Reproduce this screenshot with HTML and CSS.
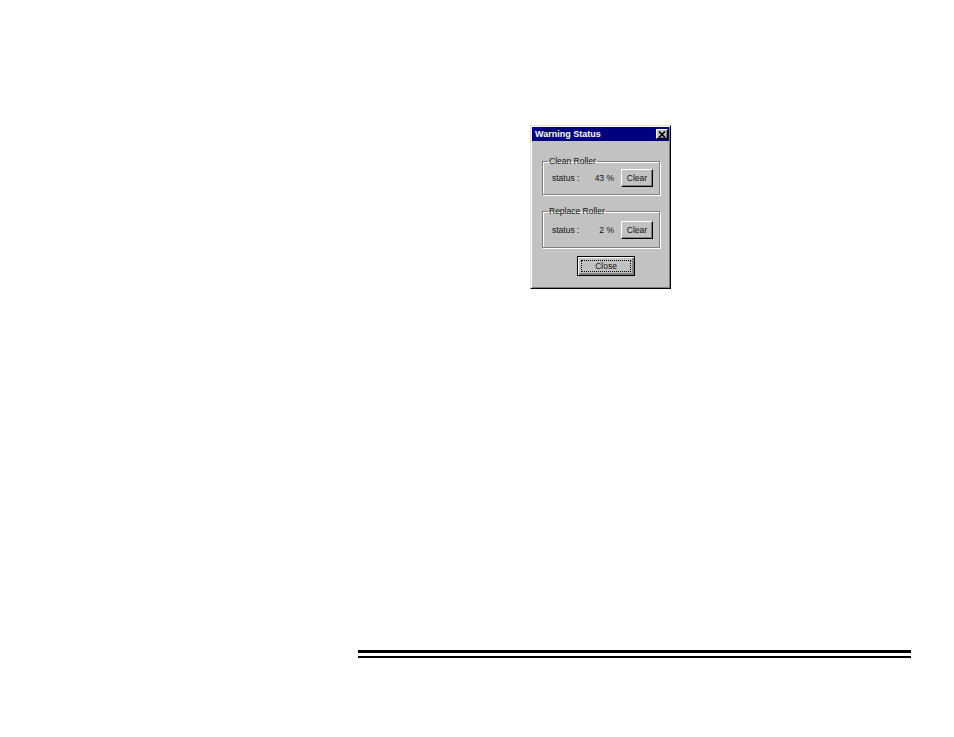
FILE: index.html
```html
<!DOCTYPE html>
<html>
<head>
<meta charset="utf-8">
<title>Warning Status</title>
<link rel="stylesheet" href="styles.css">
</head>
<body>
<div class="page">
  <div class="dialog">
    <div class="titlebar">
      <span class="title">Warning Status</span>
      <span class="xbtn"><svg width="8" height="7" viewBox="0 0 8 7"><path d="M1 0.5 L7 6.5 M7 0.5 L1 6.5" stroke="#000" stroke-width="1.6"/></svg></span>
    </div>
    <div class="body">
      <fieldset class="group g1">
        <legend>Clean Roller</legend>
        <div class="row">
          <span class="lbl">status :</span>
          <span class="pct">43 %</span>
          <span class="btn">Clear</span>
        </div>
      </fieldset>
      <fieldset class="group g2">
        <legend>Replace Roller</legend>
        <div class="row">
          <span class="lbl">status :</span>
          <span class="pct">2 %</span>
          <span class="btn">Clear</span>
        </div>
      </fieldset>
      <div class="closewrap">
        <span class="closebtn"><span class="focus">Close</span></span>
      </div>
    </div>
  </div>
  <div class="rules">
    <div class="thick"></div>
    <div class="thin"></div>
  </div>
</div>
</body>
</html>
```
FILE: styles.css
```css
html, body {
  margin: 0;
  padding: 0;
  background: #fff;
}
.page {
  width: 954px;
  height: 737px;
  overflow: hidden;
  font-family: "Liberation Sans", Arial, sans-serif;
  font-size: 8.5px;
  color: #111;
}
.dialog {
  box-sizing: border-box;
  margin: 125px 0 0 530px;
  width: 141px;
  height: 164px;
  background: #c2c2c2;
  border: 1px solid;
  border-color: #dfdfdf #000 #000 #dfdfdf;
  box-shadow: inset 1px 1px 0 #fff, inset -1px -1px 0 #808080;
  padding: 1px;
}
.titlebar {
  height: 14px;
  background: #000080;
  display: flex;
  align-items: center;
  justify-content: space-between;
  padding: 0 1px 0 3px;
}
.title {
  color: #fff;
  font-weight: bold;
  font-size: 9px;
  line-height: 14px;
}
.xbtn {
  box-sizing: border-box;
  width: 12px;
  height: 10px;
  background: #c2c2c2;
  border: 1px solid;
  border-color: #fff #000 #000 #fff;
  box-shadow: inset -1px -1px 0 #808080;
  display: flex;
  align-items: center;
  justify-content: center;
}
.xbtn svg { display: block; }
.body {
  padding: 15px 0 0 0;
}
.group {
  margin: 0 9px 0 10px;
  border: 1px solid #808080;
  box-shadow: inset 1px 1px 0 #fff, 1px 1px 0 #fff;
  padding: 3px 4px 7px 4px;
  min-width: 0;
}
.group.g2 {
  margin-top: 11px;
  padding: 5px 4px 8px 4px;
}
.group legend {
  padding: 0 1px;
  margin-left: 1px;
  font-size: 8.5px;
  line-height: 10px;
}
.row {
  display: flex;
  align-items: center;
  padding-left: 5px;
  height: 18px;
}
.lbl {
  width: 40px;
}
.pct {
  width: 22px;
  text-align: right;
  margin-right: 7px;
}
.btn {
  box-sizing: border-box;
  width: 32px;
  height: 18px;
  border: 1px solid;
  border-color: #fff #000 #000 #fff;
  box-shadow: inset -1px -1px 0 #808080;
  display: flex;
  align-items: center;
  justify-content: center;
}
.closewrap {
  padding: 8px 0 0 45px;
}
.closebtn {
  box-sizing: border-box;
  display: flex;
  width: 58px;
  height: 20px;
  border: 1px solid #000;
  box-shadow: inset 1px 1px 0 #fff, inset -1px -1px 0 #808080, inset -2px -2px 0 #808080;
  padding: 3px;
}
.focus {
  flex: 1;
  border: 1px dotted #000;
  display: flex;
  align-items: center;
  justify-content: center;
}
.rules {
  margin: 361px 0 0 358px;
  width: 553px;
}
.thick {
  height: 3px;
  background: #000;
}
.thin {
  margin-top: 3px;
  height: 2px;
  background: #000;
}
```
